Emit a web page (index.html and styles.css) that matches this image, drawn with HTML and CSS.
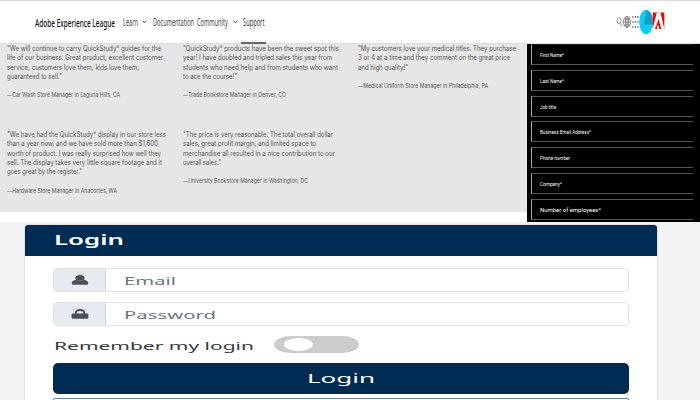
FILE: index.html
```html
<!DOCTYPE html>
<html lang="en">
<head>
<meta charset="utf-8">
<title>Adobe Experience League</title>
<link rel="stylesheet" href="styles.css">
</head>
<body>
<header class="topbar">
  <div class="brand"><span data-w="80">Adobe Experience League</span></div>
  <nav class="nav">
    <a class="learn"><span data-w="15">Learn</span></a>
    <svg class="chev" viewBox="0 0 5 4"><path d="M.6.7 2.5 3 4.4.7"/></svg>
    <a class="docs"><span data-w="41">Documentation</span></a>
    <a class="community"><span data-w="31">Community</span></a>
    <svg class="chev chev2" viewBox="0 0 5 4"><path d="M.6.7 2.5 3 4.4.7"/></svg>
    <a class="support"><span data-w="21.5">Support</span></a>
  </nav>
  <svg class="tools" viewBox="0 0 50 30">
    <g fill="none" stroke="#666" stroke-width=".7">
      <ellipse cx="3" cy="13.7" rx="1.9" ry="3.2"/><path d="M4.2 16.500 6 19.500"/>
      <ellipse cx="11" cy="15" rx="3.600" ry="5.600"/><ellipse cx="11" cy="15" rx="1.600" ry="5.600"/>
      <path d="M11 9.400v11.200M7.400 15h7.200M8 12h6M8 18h6"/>
    </g>
    <path d="M16.300 10h6.400M16.300 15h6.400M16.300 20h6.400" stroke="#555" stroke-width="1.500" stroke-dasharray="1.200 1.300"/>
    <ellipse cx="30" cy="15" rx="6.800" ry="12.200" fill="#0bcdf8"/>
    <path d="M30.800 3.200C35 4 37 9 36.700 17.500H27.600Z" fill="#159fbd"/>
    <path d="M36.700 5.500h11.600v16.500H36.700z" fill="#e8080c"/>
    <path d="M40.800 5.500h3.600l3.900 16.500H41.500l-.9-3.800h2.200l-1.300-5.200L39 22H36.700Z" fill="#fff"/>
    <path d="M42.500 9.500 45.700 22h-2.200l-1-3.800h-2.200Z" fill="#fff"/>
    <path d="M42.500 11.500 45.300 22h-2l-.9-3.500h-1.700Z" fill="#e8080c"/>
  </svg>
</header>
<main class="middle">
  <section class="quotes">
    <article>
      <p><span data-w="154">"We will continue to carry QuickStudy<sup>®</sup> guides for the</span></p>
      <p><span data-w="156">life of our business. Great product, excellent customer</span></p>
      <p><span data-w="132">service, customers love them, kids love them;</span></p>
      <p><span data-w="55">guaranteed to sell."</span></p>
      <cite><span data-w="113">—Car Wash Store Manager in Laguna Hills, CA</span></cite>
    </article>
    <article>
      <p><span data-w="156">"QuickStudy<sup>®</sup> products have been the sweet spot this</span></p>
      <p><span data-w="149">year! I have doubled and tripled sales this year from</span></p>
      <p><span data-w="155">students who need help and from students who want</span></p>
      <p><span data-w="54">to ace the course!"</span></p>
      <cite><span data-w="103">—Trade Bookstore Manager in Denver, CO</span></cite>
    </article>
    <article>
      <p><span data-w="158">"My customers love your medical titles. They purchase</span></p>
      <p><span data-w="152">3 or 4 at a time and they comment on the great price</span></p>
      <p><span data-w="50">and high quality!"</span></p>
      <cite><span data-w="130">—Medical Uniform Store Manager in Philadelphia, PA</span></cite>
    </article>
    <article>
      <p><span data-w="159">"We have had the QuickStudy<sup>®</sup> display in our store less</span></p>
      <p><span data-w="151">than a year now, and we have sold more than $1,600</span></p>
      <p><span data-w="154">worth of product. I was really surprised how well they</span></p>
      <p><span data-w="155">sell. The display takes very little square footage and it</span></p>
      <p><span data-w="75">goes great by the register."</span></p>
      <cite><span data-w="110">—Hardware Store Manager in Anacortes, WA</span></cite>
    </article>
    <article>
      <p><span data-w="150">"The price is very reasonable. The total overall dollar</span></p>
      <p><span data-w="133">sales, great profit margin, and limited space to</span></p>
      <p><span data-w="152">merchandise all resulted in a nice contribution to our</span></p>
      <p><span data-w="38">overall sales."</span></p>
      <cite><span data-w="125">—University Bookstore Manager in Washington, DC</span></cite>
    </article>
  </section>
  <form class="lead">
    <div class="field"><span data-w="24">First Name*</span></div>
    <div class="field"><span data-w="24">Last Name*</span></div>
    <div class="field"><span data-w="16">Job title</span></div>
    <div class="field"><span data-w="51">Business Email Address*</span></div>
    <div class="field"><span data-w="30">Phone number</span></div>
    <div class="field"><span data-w="22">Company*</span></div>
    <div class="field large"><span data-w="61">Number of employees*</span></div>
  </form>
</main>
<section class="signin">
  <div class="card">
    <h1><span data-w="70">Login</span></h1>
    <div class="card-body">
      <div class="group">
        <div class="addon"><svg viewBox="0 0 18 10"><ellipse cx="9" cy="2.900" rx="4.600" ry="2.900"/><path d="M.8 8.200C.8 6.300 2.500 5.200 5.100 4.800 7 6.300 11 6.300 12.900 4.800 15.500 5.200 17.200 6.300 17.200 8.200 17.200 9.200 16.600 9.700 15.500 9.700H2.500C1.400 9.700.8 9.200.8 8.200Z"/></svg></div>
        <div class="input"><span data-w="52">Email</span></div>
      </div>
      <div class="group">
        <div class="addon"><svg viewBox="0 0 18 10"><path d="M4.800 5V3.800C4.800 2 6.500 1 9 1s4.200 1 4.200 2.800V5" fill="none" stroke="#495057" stroke-width="1.800"/><rect x=".6" y="4.400" width="16.800" height="5.400" rx="1.200"/></svg></div>
        <div class="input"><span data-w="92">Password</span></div>
      </div>
      <div class="remember"><label><span data-w="200">Remember my login</span></label><i class="toggle"></i></div>
      <div class="button"><span data-w="68">Login</span></div>
      <div class="button outline"></div>
    </div>
  </div>
</section>
<script src="fit.js"></script>
</body>
</html>
```
FILE: styles.css
```css
* { box-sizing: border-box; }
body { margin: 0; width: 700px; height: 400px; overflow: hidden; background: #fff; display: flex; flex-direction: column; }
p, h1, cite { margin: 0; font-weight: 400; font-style: normal; }
[data-w] { display: inline-block; white-space: nowrap; transform-origin: 0 50%; }

.topbar { height: 44px; flex: none; border-top: 1px solid #ddd; border-bottom: 1px solid #ddd; padding-left: 35px; display: flex; align-items: stretch; font-family: "Noto Sans", sans-serif; position: relative; z-index: 1; background: #fff; }
.brand { width: 88px; font-size: 11px; font-weight: 500; line-height: 43px; color: #111; }
.nav { display: flex; align-items: flex-start; width: 494px; font-size: 10px; line-height: 42px; color: #444; }
.nav a { height: 43px; }
.learn { width: 19px; }
.docs { width: 44px; }
.community { width: 35px; }
.support { width: 25px; padding-left: 2px; border-bottom: 2px solid #666; color: #333; }
.chev { width: 5px; height: 4px; margin: 19px 6px 0 0; fill: none; stroke: #444; stroke-width: .9; }
.chev2 { margin-right: 3px; margin-left: 1px; }
.tools { width: 50px; height: 30px; margin: 6px 0 0 -1px; }

.middle { height: 178px; flex: none; display: flex; align-items: flex-start; }
.quotes { width: 527px; height: 168px; background: #e6e6e6; padding-left: 7px; display: grid; grid-template-columns: 175.500px 175.500px 169px; grid-template-rows: 86px 82px; font-family: Inter, sans-serif; font-weight: 300; color: #555; }
.quotes p { height: 9.350px; line-height: 9.350px; font-size: 7px; }
.quotes p span { height: 9.350px; }
.quotes sup { font-size: 5px; line-height: 0; vertical-align: 2px; }
.quotes cite { display: block; margin-top: 10px; height: 9px; line-height: 9px; font-size: 5.500px; }

.lead { width: 173px; height: 178px; background: #000; padding: 0 7px 0 4px; display: flex; flex-direction: column; gap: 4.800px; overflow: hidden; font-family: Roboto, sans-serif; }
.field { height: 21px; flex: none; border: 1px solid #555; border-left-color: #aaa; border-right: 0; padding-left: 8px; line-height: 20px; font-size: 5px; color: #fff; }
.field:first-child { border-top-color: #222; }
.large { font-size: 6.200px; }

.signin { height: 178px; flex: none; background: #f3f3f3; padding: 3px 0 0 25px; font-family: "Noto Sans", sans-serif; }
.card { width: 632px; height: 175px; background: #fff; border-radius: 4px 4px 0 0; box-shadow: 0 0 0 1px #e0e0e0; }
.card h1 { height: 31px; background: #002c54; border-radius: 3px 3px 0 0; padding-left: 29px; line-height: 31px; font-size: 13.500px; font-weight: 600; color: #fff; }
.card-body { padding: 12px 28px 0; }
.group { height: 24px; margin-bottom: 10px; display: flex; border: 1px solid #dfe2e5; border-radius: 4px; overflow: hidden; }
.addon { width: 52px; background: #e7ebef; border-right: 1px solid #ced4da; display: flex; align-items: center; justify-content: center; }
.addon svg { width: 18px; height: 10px; fill: #495057; }
.input { flex: 1; padding-left: 18px; line-height: 24px; font-size: 11.500px; color: #6c757d; }
.remember { height: 27px; display: flex; align-items: flex-start; font-size: 11.500px; line-height: 20px; color: #333a40; }
.remember label { width: 221px; padding-left: 1px; }
.toggle { width: 85px; height: 17px; border-radius: 17px / 8.500px; background: #ccc; display: flex; align-items: center; padding-left: 10px; }
.toggle::before { content: ""; width: 29px; height: 13px; border-radius: 50%; background: #fff; }
.button { height: 31px; background: #002c54; border-radius: 5px; color: #fff; font-size: 12.500px; line-height: 31px; padding-left: 254px; }
.outline { margin-top: 4px; height: 2px; background: #fff; border: 1px solid #6c8195; border-bottom: 0; border-radius: 5px 5px 0 0; }
```
FILE: fit.js
```js
// Scales each label horizontally to the width given in data-w.
document.querySelectorAll("[data-w]").forEach(function (el) {
  el.style.transform = "scaleX(" + el.dataset.w / el.getBoundingClientRect().width + ")";
});
```
